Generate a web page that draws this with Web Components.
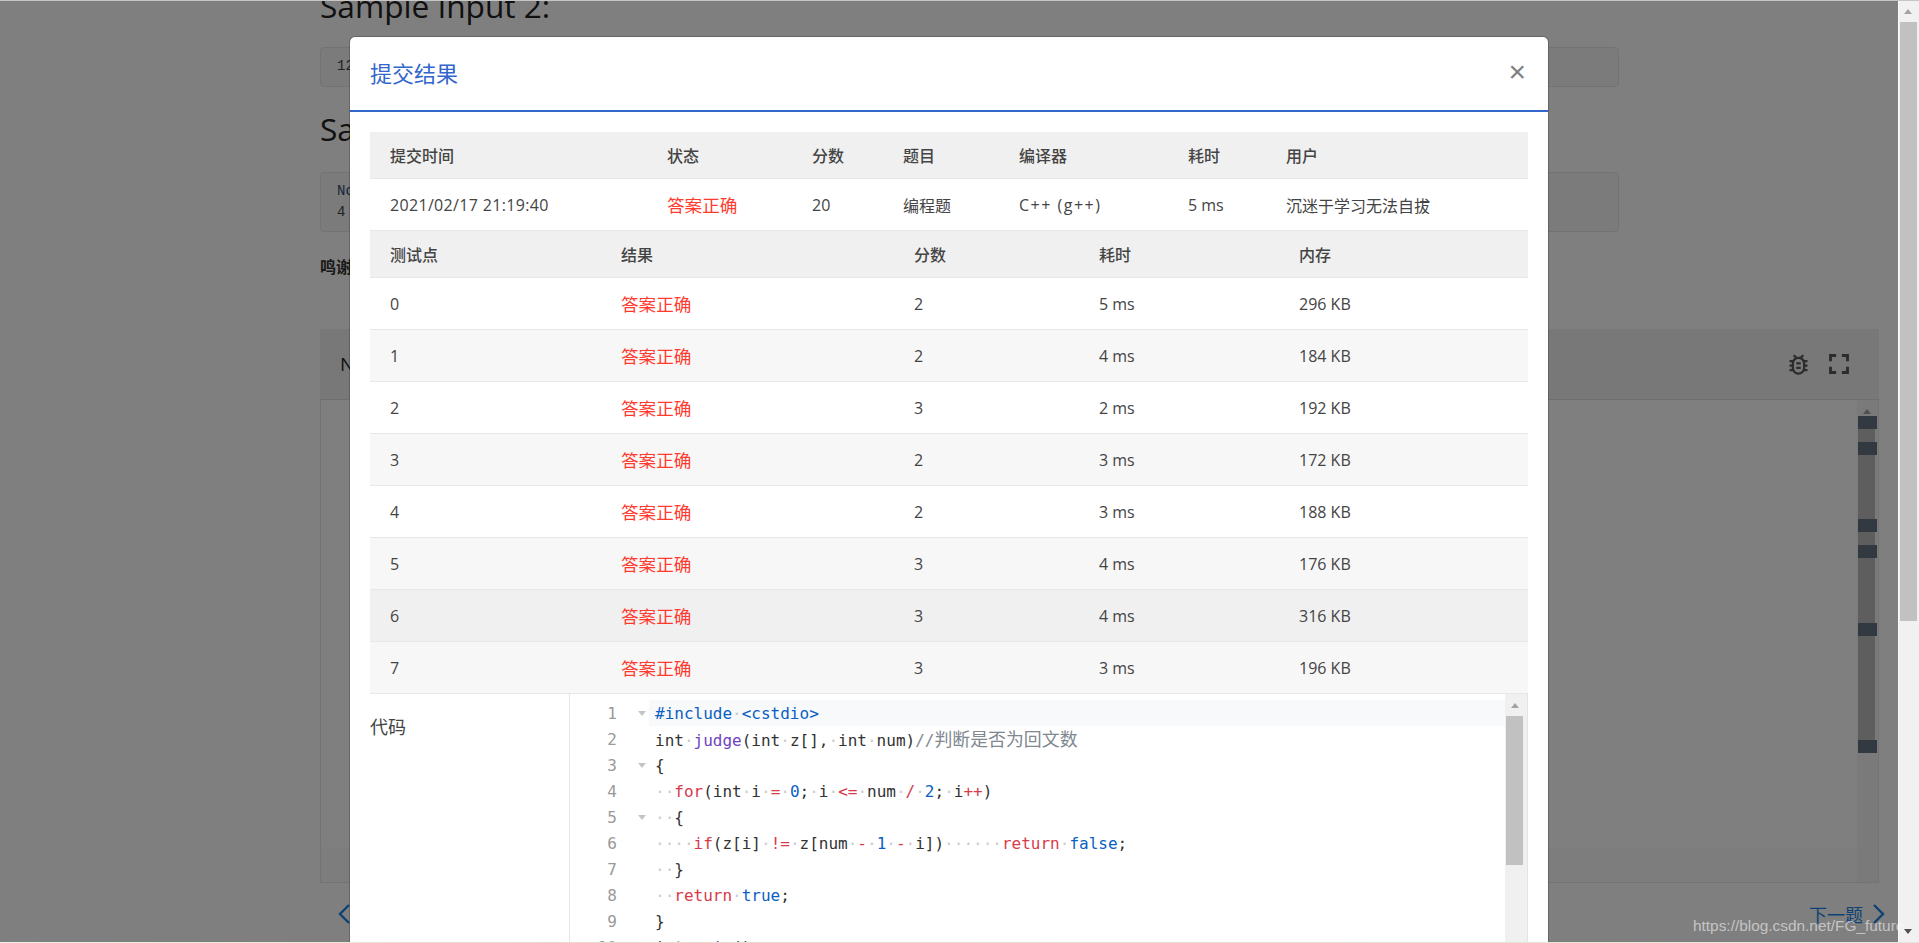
<!DOCTYPE html>
<html lang="zh">
<head>
<meta charset="utf-8">
<title>提交结果</title>
<style>
  html, body { margin: 0; height: 943px; overflow: hidden; background: #fff; }
  body { font-family: "Open Sans", "Noto Sans CJK SC", sans-serif; color: #444; }
</style>
</head>
<body>
<app-shell>
  <problem-page slot="page"></problem-page>
  <modal-dialog slot="modal" heading="提交结果">
    <grid-row head cols="277px 145px 91px 116px 169px 98px 1fr">
      <span>提交时间</span><span>状态</span><span>分数</span><span>题目</span><span>编译器</span><span>耗时</span><span>用户</span>
    </grid-row>
    <grid-row cols="277px 145px 91px 116px 169px 98px 1fr">
      <span class="date">2021/02/17 21:19:40</span><span class="ok">答案正确</span><span>20</span><span>编程题</span><span class="lang">C++ (g++)</span><span>5 ms</span><span>沉迷于学习无法自拔</span>
    </grid-row>
    <case-table id="cases"></case-table>
    <code-row></code-row>
  </modal-dialog>
  <page-scrollbar slot="bar"></page-scrollbar>
</app-shell>

<script>
class AppShell extends HTMLElement {
  constructor() {
    super();
    this.attachShadow({ mode: "open" }).innerHTML = `
      <style>
        :host { display: grid; grid-template-columns: 1fr 21px; grid-template-rows: 1px 941px 1px; height: 943px; position: relative; overflow: hidden; }
        .top { grid-column: 1 / 3; background: #c6c6c6; }
        .bottom { grid-column: 1 / 3; background: linear-gradient(90deg, #f4efe6, #e6dcc8 30%, #e9e2d2 70%, #e3e6dc); }
        main { position: relative; overflow: hidden; background: #fff; }
        .backdrop { position: absolute; inset: 0; background: rgba(0, 0, 0, .5); }
        .modal-wrap { position: absolute; inset: 0; display: flex; justify-content: center; align-items: flex-start; padding-top: 35px; }
        .mark { position: absolute; left: 1693px; top: 917px; font: 15.4px "Liberation Sans", sans-serif; color: rgba(255, 255, 255, .55); white-space: nowrap; }
      </style>
      <div class="top"></div>
      <main>
        <slot name="page"></slot>
        <div class="backdrop"></div>
        <div class="modal-wrap"><slot name="modal"></slot></div>
      </main>
      <slot name="bar"></slot>
      <div class="bottom"></div>
      <div class="mark">https://blog.csdn.net/FG_future</div>
    `;
  }
}
customElements.define("app-shell", AppShell);

class PageScrollbar extends HTMLElement {
  constructor() {
    super();
    this.attachShadow({ mode: "open" }).innerHTML = `
      <style>
        :host { display: flex; flex-direction: column; align-items: center; background: #f1f1f1; border-left: 1px solid #fafafa; padding-right: 2px; height: 941px; box-sizing: border-box; position: relative; }
        .up { width: 0; height: 0; margin-top: 8px; border: 4.5px solid transparent; border-top: 0; border-bottom: 5px solid #a3a3a3; }
        .thumb { width: 17px; height: 599px; margin-top: 8px; background: #c1c1c1; }
        .down { width: 0; height: 0; margin-top: 308px; border: 4.5px solid transparent; border-bottom: 0; border-top: 5px solid #505050; }
      </style>
      <div class="up"></div><div class="thumb"></div><div class="down"></div>
    `;
  }
}
customElements.define("page-scrollbar", PageScrollbar);

class ProblemPage extends HTMLElement {
  constructor() {
    super();
    this.attachShadow({ mode: "open" }).innerHTML = `
      <style>
        :host { display: block; padding-left: 320px; color: #222; }
        h2 { margin: 0; font-weight: 400; font-size: 31.6px; line-height: 40px; }
        .first { margin-top: -15px; }
        .second { margin-top: 22px; }
        .box { width: 1299px; box-sizing: border-box; background: #f7f7f7; border: 1px solid #e6e6e6; border-radius: 4px; padding: 8px 16px; font: 14px/21px "Liberation Mono", monospace; color: #444; }
        .b1 { margin-top: 21px; height: 40px; }
        .b2 { margin-top: 23px; height: 60px; }
        .b2 .no { color: #2c4a78; }
        .thanks { margin-top: 23px; font-size: 16px; line-height: 24px; font-weight: 700; color: #333; }
        .panel { margin-top: 50px; width: 1559px; height: 554px; display: flex; flex-direction: column; }
        .panel-head { height: 70px; flex: none; background: #f0f0f0; display: flex; align-items: center; padding: 0 23px 0 20px; font-size: 19px; gap: 10px; box-sizing: border-box; }
        .panel-head span { flex: 1; }
        .panel-head svg { fill: #585858; display: block; }
        .panel-body { flex: 1; display: flex; border: 1px solid #e6e6e6; border-top-color: #dcdcdc; }
        .content { flex: 1; display: flex; flex-direction: column; justify-content: flex-end; }
        .status { height: 35px; background: #f8faf8; }
        .ruler { width: 21px; background: #f4f4f4; position: relative; }
        .ruler .arrow { position: absolute; left: 6px; top: 9px; width: 0; height: 0; border: 4.5px solid transparent; border-top: 0; border-bottom: 5px solid #a0a0a0; }
        .ruler .thumb { position: absolute; left: 1px; top: 16px; width: 17px; height: 337px; background: #bcbcbc; }
        .ruler i { position: absolute; left: 1px; width: 19px; height: 13px; background: #667280; }
        nav { margin-top: 11px; width: 1559px; height: 40px; display: flex; align-items: center; justify-content: space-between; padding: 0 0 0 18px; box-sizing: border-box; color: #1e84e6; font-size: 18px; }
        nav div { display: flex; align-items: center; gap: 10px; margin-right: -6px; }
        nav svg { display: block; fill: none; stroke: #1e84e6; stroke-width: 2.4; }
      </style>
      <h2 class="first">Sample Input 2:</h2>
      <div class="box b1">12</div>
      <h2 class="second">Sa</h2>
      <div class="box b2"><div class="no">No</div><div>4</div></div>
      <div class="thanks">鸣谢</div>
      <section class="panel">
        <div class="panel-head">
          <span>N</span>
          <svg width="27" height="27" viewBox="0 0 24 24"><path d="M20 8h-2.81c-.45-.78-1.07-1.45-1.82-1.96L17 4.41 15.59 3l-2.17 2.17C12.96 5.06 12.49 5 12 5c-.49 0-.96.06-1.41.17L8.41 3 7 4.41l1.62 1.63C7.88 6.55 7.26 7.22 6.81 8H4v2h2.09c-.05.33-.09.66-.09 1v1H4v2h2v1c0 .34.04.67.09 1H4v2h2.81c1.04 1.79 2.97 3 5.19 3s4.15-1.21 5.19-3H20v-2h-2.09c.05-.33.09-.66.09-1v-1h2v-2h-2v-1c0-.34-.04-.67-.09-1H20V8zm-4 7c0 2.21-1.79 4-4 4s-4-1.79-4-4v-4c0-2.21 1.79-4 4-4s4 1.79 4 4v4zm-6-1h4v2h-4zm0-4h4v2h-4z"/></svg>
          <svg width="34" height="34" viewBox="0 0 24 24"><path d="M7 14H5v5h5v-2H7v-3zm-2-4h2V7h3V5H5v5zm12 7h-3v2h5v-5h-2v3zM14 5v2h3v3h2V5h-5z"/></svg>
        </div>
        <div class="panel-body">
          <div class="content"><div class="status"></div></div>
          <div class="ruler">
            <div class="arrow"></div>
            <div class="thumb"></div>
            <i style="top:16px"></i><i style="top:42px"></i><i style="top:119px"></i><i style="top:145px"></i><i style="top:223px"></i><i style="top:340px"></i>
          </div>
        </div>
      </section>
      <nav>
        <svg width="12" height="20" viewBox="0 0 12 20"><path d="M11 1 2 10l9 9"/></svg>
        <div>下一题<svg width="12" height="20" viewBox="0 0 12 20"><path d="M1 1l9 9-9 9"/></svg></div>
      </nav>
    `;
  }
}
customElements.define("problem-page", ProblemPage);

class ModalDialog extends HTMLElement {
  constructor() {
    super();
    this.attachShadow({ mode: "open" }).innerHTML = `
      <style>
        :host { display: block; width: 1200px; box-sizing: border-box; background: #fff; border: 1px solid rgba(0, 0, 0, .2); border-radius: 6px; background-clip: padding-box; flex: none; }
        header { height: 75px; box-sizing: border-box; border-bottom: 2px solid #3366cc; display: flex; justify-content: space-between; align-items: center; padding: 0 20px; }
        h1 { margin: -3px 0 0; font-size: 22px; font-weight: 400; color: #3366cc; }
        .close { font: 400 30px/1 "Liberation Sans", sans-serif; color: #808080; margin: -4px 2px 0 0; }
        .body { padding: 20px 20px 0; }
      </style>
      <header><h1></h1><span class="close">×</span></header>
      <div class="body"><slot></slot></div>
    `;
    this.shadowRoot.querySelector("h1").textContent = this.getAttribute("heading");
  }
}
customElements.define("modal-dialog", ModalDialog);

class GridRow extends HTMLElement {
  constructor() {
    super();
    this.attachShadow({ mode: "open" }).innerHTML = `
      <style>
        :host { display: grid; align-items: center; height: 52px; box-sizing: border-box; border-bottom: 1px solid #e8e8e8; font-size: 16px; color: #444; }
        :host([head]) { height: 47px; background: #f0f0f0; font-weight: 500; color: #444; }
        :host([alt]) { background: #f7f7f7; }
        :host([hover]) { background: #f0f0f0; }
        ::slotted(*) { padding-left: 20px; white-space: nowrap; }
        ::slotted(.ok) { color: #ff3b30; font-size: 17.6px; }
        ::slotted(.date) { letter-spacing: .33px; }
        ::slotted(.lang) { letter-spacing: 1.5px; }
      </style>
      <slot></slot>
    `;
  }
  connectedCallback() {
    this.style.gridTemplateColumns = this.getAttribute("cols");
  }
}
customElements.define("grid-row", GridRow);

class CaseTable extends HTMLElement {
  constructor() {
    super();
    const cols = "231px 293px 185px 200px 1fr";
    const cases = [
      [0, 2, 5, 296], [1, 2, 4, 184], [2, 3, 2, 192], [3, 2, 3, 172],
      [4, 2, 3, 188], [5, 3, 4, 176], [6, 3, 4, 316], [7, 3, 3, 196]
    ];
    const rows = cases.map((c, i) => `
      <grid-row cols="${cols}" ${i % 2 ? "alt" : ""} ${i === 6 ? "hover" : ""}>
        <span>${c[0]}</span><span class="ok">答案正确</span><span>${c[1]}</span><span>${c[2]} ms</span><span>${c[3]} KB</span>
      </grid-row>`).join("");
    this.attachShadow({ mode: "open" }).innerHTML = `
      <style>:host { display: block; }</style>
      <grid-row head cols="${cols}"><span>测试点</span><span>结果</span><span>分数</span><span>耗时</span><span>内存</span></grid-row>
      ${rows}
    `;
  }
}
customElements.define("case-table", CaseTable);

class CodeRow extends HTMLElement {
  constructor() {
    super();
    this.attachShadow({ mode: "open" }).innerHTML = `
      <style>
        :host { display: flex; }
        .label { width: 199px; flex: none; padding-top: 20px; font-size: 18px; line-height: 26px; color: #444; }
      </style>
      <div class="label">代码</div>
      <code-editor></code-editor>
    `;
  }
}
customElements.define("code-row", CodeRow);

class CodeEditor extends HTMLElement {
  constructor() {
    super();
    const d = "<b>·</b>";
    const kw = (s) => `<em>${s}</em>`;
    const num = (s) => `<u>${s}</u>`;
    const lines = [
      [1, `<u>#include${d}&lt;cstdio&gt;</u>`],
      [0, `int${d}<s>judge</s>(int${d}z[],${d}int${d}num)<q>//<span>判断是否为回文数</span></q>`],
      [1, `{`],
      [0, `${d}${d}${kw("for")}(int${d}i${d}${kw("=")}${d}${num("0")};${d}i${d}${kw("&lt;=")}${d}num${d}${kw("/")}${d}${num("2")};${d}i${kw("++")})`],
      [1, `${d}${d}{`],
      [0, `${d}${d}${d}${d}${kw("if")}(z[i]${d}${kw("!=")}${d}z[num${d}${kw("-")}${d}${num("1")}${d}${kw("-")}${d}i])${d}${d}${d}${d}${d}${d}${kw("return")}${d}${num("false")};`],
      [0, `${d}${d}}`],
      [0, `${d}${d}${kw("return")}${d}${num("true")};`],
      [0, `}`],
      [0, `int${d}<s>main</s>()`]
    ];
    const rows = lines.map((l, i) => `
      <div class="line ${i === 0 ? "active" : ""}">
        <span class="no">${i + 1}</span><span class="fold ${l[0] ? "on" : ""}"></span><code>${l[1]}</code>
      </div>`).join("");
    this.attachShadow({ mode: "open" }).innerHTML = `
      <style>
        :host { display: flex; flex: 1; height: 260px; border-left: 1px solid #e4e4e4; border-right: 1px solid #e4e4e4; box-sizing: border-box; font: 16px/28px "DejaVu Sans Mono", "Noto Sans CJK SC", monospace; color: #333; }
        .lines { flex: 1; padding-top: 6px; min-width: 0; }
        .line { display: flex; height: 26px; white-space: pre; }
        .no { width: 47px; text-align: right; color: #999; flex: none; }
        .fold { width: 32px; flex: none; position: relative; }
        .fold.on::after { content: ""; position: absolute; right: 3px; top: 11px; border: 4px solid transparent; border-bottom: 0; border-top: 5px solid #c4c4c4; }
        code { font: inherit; padding-left: 6px; flex: 1; }
        .active { background: linear-gradient(90deg, transparent 79px, #f8f9fb 79px); }
        b { font-weight: 400; color: #cccccc; }
        em { font-style: normal; color: #d73a49; }
        u { text-decoration: none; color: #0a5fc4; }
        s { text-decoration: none; color: #6f42c1; }
        q { quotes: none; color: #808890; }
        q span { font-size: 17.9px; }
        .bar { width: 22px; flex: none; background: #f0f0f0; display: flex; flex-direction: column; align-items: center; padding-right: 3px; box-sizing: border-box; }
        .bar .up { width: 0; height: 0; margin-top: 9px; border: 4.5px solid transparent; border-top: 0; border-bottom: 5px solid #a3a3a3; }
        .bar .thumb { width: 17px; height: 149px; margin-top: 8px; background: #c1c1c1; }
      </style>
      <div class="lines">${rows}</div>
      <div class="bar"><div class="up"></div><div class="thumb"></div></div>
    `;
  }
}
customElements.define("code-editor", CodeEditor);
</script>
</body>
</html>
